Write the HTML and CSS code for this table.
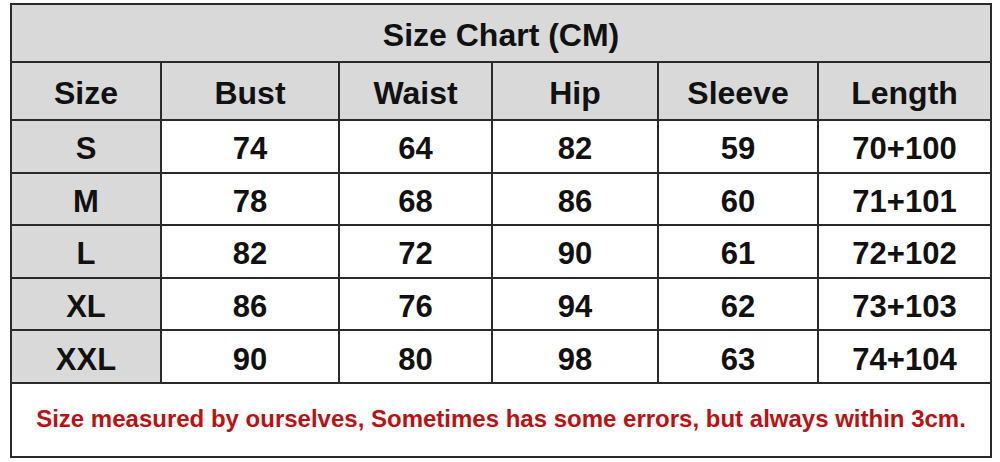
FILE: index.html
```html
<!DOCTYPE html>
<html>
<head>
<meta charset="utf-8">
<link rel="stylesheet" href="styles.css">
</head>
<body>
<div class="page">
<table class="chart">
  <colgroup>
    <col class="c1"><col class="c2"><col class="c3"><col class="c4"><col class="c5"><col class="c6">
  </colgroup>
  <tr class="title-row"><th colspan="6">Size Chart (CM)</th></tr>
  <tr class="head-row"><th>Size</th><th>Bust</th><th>Waist</th><th>Hip</th><th>Sleeve</th><th>Length</th></tr>
  <tr class="data-row"><th>S</th><td>74</td><td>64</td><td>82</td><td>59</td><td>70+100</td></tr>
  <tr class="data-row"><th>M</th><td>78</td><td>68</td><td>86</td><td>60</td><td>71+101</td></tr>
  <tr class="data-row"><th>L</th><td>82</td><td>72</td><td>90</td><td>61</td><td>72+102</td></tr>
  <tr class="data-row"><th>XL</th><td>86</td><td>76</td><td>94</td><td>62</td><td>73+103</td></tr>
  <tr class="data-row"><th>XXL</th><td>90</td><td>80</td><td>98</td><td>63</td><td>74+104</td></tr>
  <tr class="note-row"><td colspan="6">Size measured by ourselves, Sometimes has some errors, but always within 3cm.</td></tr>
</table>
</div>
</body>
</html>
```

FILE: styles.css
```css
html, body {
  margin: 0;
  padding: 0;
  background: #ffffff;
}
.page {
  padding: 3px 0 0 10px;
}
.chart {
  border-collapse: collapse;
  table-layout: fixed;
  width: 980px;
  font-family: "Liberation Sans", Arial, sans-serif;
  font-weight: bold;
  color: #111111;
}
.c1 { width: 150px; }
.c2 { width: 178px; }
.c3 { width: 153px; }
.c4 { width: 166px; }
.c5 { width: 160px; }
.c6 { width: 173px; }
.chart th, .chart td {
  border: 2px solid #2a2a2a;
  text-align: center;
  vertical-align: middle;
  padding: 0;
  font-size: 31px;
  font-weight: bold;
  line-height: 1;
}
.title-row th {
  height: 53px;
  padding-top: 3px;
  background: #d9d9d9;
  font-size: 32px;
}
.head-row th {
  height: 53px;
  padding-top: 3px;
  background: #d9d9d9;
  font-size: 32px;
}
.data-row th {
  background: #d9d9d9;
  height: 45.6px;
  padding-top: 5px;
  font-size: 31px;
}
.data-row td {
  background: #ffffff;
  height: 45.6px;
  padding-top: 5px;
  font-size: 31px;
}
.note-row td {
  height: 70px;
  font-size: 24px;
  color: #bb1111;
  padding-bottom: 2px;
}
```
